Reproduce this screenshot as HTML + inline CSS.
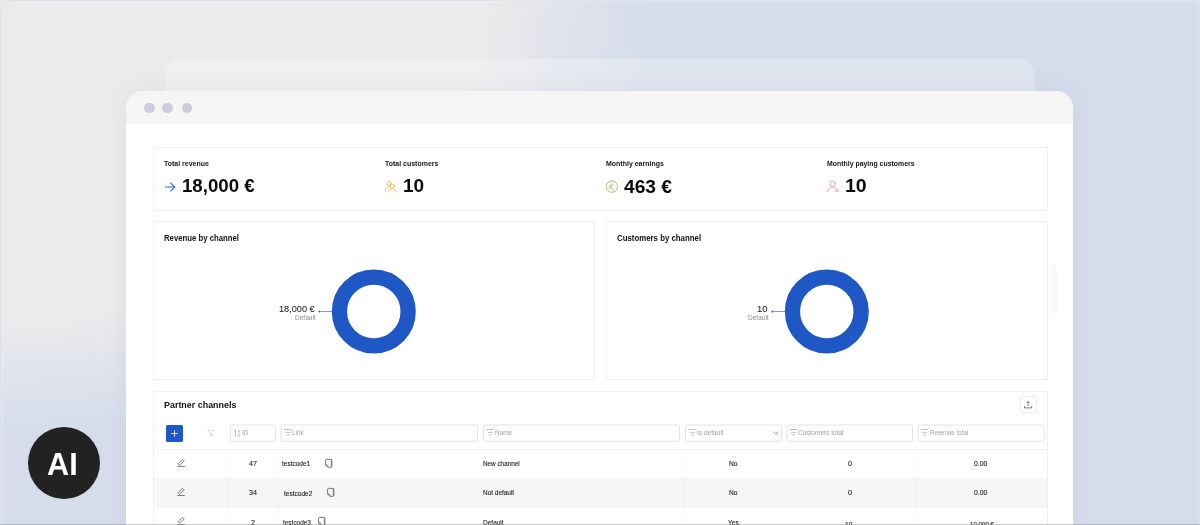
<!DOCTYPE html>
<html><head><meta charset="utf-8">
<style>
*{margin:0;padding:0;box-sizing:border-box}
html,body{width:1200px;height:525px;overflow:hidden}
body{font-family:"Liberation Sans",sans-serif;color:#111;position:relative;background:#d5ddeb}
.bg{position:absolute;left:0;top:0;width:1200px;height:525px;
background:radial-gradient(ellipse 700px 465px at 0 0,#ebebeb 0,#ebebeb 69%,#e0e3eb 81%,#d5ddeb 93%)}
.ghost{position:absolute;left:165px;top:59px;width:870px;height:60px;border-radius:16px;background:rgba(255,255,255,.27)}
.win{position:absolute;left:126px;top:91px;width:947px;height:460px;border-radius:17px;background:#fff;box-shadow:0 0 24px rgba(95,100,145,.085)}
.tb{position:absolute;left:0;top:0;width:100%;height:32.5px;background:#f5f5f5;border-radius:17px 17px 0 0}
.dot{position:absolute;top:11.65px;width:10.7px;height:10.7px;border-radius:50%;background:#cbccdc}
.card{position:absolute;border:1px solid #efefef;background:#fff;border-radius:1px}
.x{position:absolute;white-space:nowrap;line-height:1;transform-origin:0 50%;z-index:6}
.inp{position:absolute;top:424.7px;height:16.8px;border:1px solid #e5e5e5;border-radius:2px;background:#fff}
.ai{position:absolute;left:28.05px;top:427.2px;width:72.1px;height:72.1px;border-radius:50%;background:#222}
.ai span{position:absolute;left:0;width:72px;text-align:center;top:17px;font-size:33px;font-weight:bold;color:#fff;letter-spacing:-.5px}
</style></head><body>
<div class="bg"></div>
<svg style="position:absolute;left:0;top:0" width="1200" height="525" viewBox="0 0 1200 525">
<path d="M8 0H1200V1H8ZM0 7H1.8V525H0Z" fill="rgba(223,225,238,.85)"/><path d="M0 0H8V1H16A14.5 14.5 0 0 0 1.8 15.5V7H0Z" fill="rgba(231,231,238,.85)"/>
<path d="M1.8 15.5V525H3.2V16A12.8 12.8 0 0 1 16 2.2H1198.5V1H16A14.5 14.5 0 0 0 1.8 15.5Z" fill="rgba(240,240,246,.4)"/>
<path d="M1198.5 1H1200V525H1198.5Z" fill="rgba(222,229,232,.7)"/>
<path d="M1190 1H1198.5V10A9 9 0 0 0 1190 1Z" fill="rgba(222,226,232,.6)"/>
</svg>
<div class="ghost"></div>
<div class="win"><div class="tb"></div>
<div class="dot" style="left:18.25px"></div><div class="dot" style="left:36.35px"></div><div class="dot" style="left:55.75px"></div>
</div>
<div class="card" style="left:153px;top:147.4px;width:895px;height:63.4px"></div>
<div class="card" style="left:152.7px;top:221.4px;width:442.3px;height:158.6px"></div>
<div class="card" style="left:605.5px;top:221.4px;width:442.5px;height:158.6px"></div>
<div class="card" style="left:153px;top:390.5px;width:895px;height:160px"></div>
<div style="position:absolute;left:1020px;top:396px;width:16.5px;height:16.5px;border:1px solid #ededed;border-radius:2px;background:#fff"></div>
<div style="position:absolute;left:166px;top:425px;width:17px;height:17px;border-radius:1.5px;background:#1f57c4"></div>
<div style="position:absolute;left:154px;top:449px;width:893px;height:1px;background:#f1f1f1"></div>
<div style="position:absolute;left:154px;top:478px;width:893px;height:29.5px;background:#f5f6f7"></div>
<div style="position:absolute;left:0;top:524px;width:1200px;height:1px;background:rgba(150,152,160,.52);z-index:8"></div>
<div style="position:absolute;left:228px;top:455px;width:1px;height:75px;background:rgba(0,0,0,.025)"></div>
<div style="position:absolute;left:278px;top:455px;width:1px;height:75px;background:rgba(0,0,0,.025)"></div>
<div style="position:absolute;left:683px;top:455px;width:1px;height:75px;background:rgba(0,0,0,.022)"></div>
<div style="position:absolute;left:915px;top:455px;width:1px;height:75px;background:rgba(0,0,0,.022)"></div>
<div style="position:absolute;left:1050.5px;top:264px;width:6px;height:50px;border-radius:3px;background:rgba(0,0,0,.022);filter:blur(1.2px)"></div>
<div class="ai"></div>
<div style="position:absolute;left:0;top:0;width:1200px;height:525px;will-change:transform;z-index:6"><div class="x" id="x0" style="left:163.72px;top:160.01px;font-size:7.2px;font-weight:bold;color:#151515;transform:scaleX(0.9713)">Total revenue</div>
<div class="x" id="x1" style="left:384.52px;top:160.01px;font-size:7.2px;font-weight:bold;color:#151515;transform:scaleX(0.9708)">Total customers</div>
<div class="x" id="x2" style="left:605.52px;top:160.01px;font-size:7.2px;font-weight:bold;color:#151515;transform:scaleX(0.9725)">Monthly earnings</div>
<div class="x" id="x3" style="left:826.53px;top:160.01px;font-size:7.2px;font-weight:bold;color:#151515;transform:scaleX(0.9617)">Monthly paying customers</div>
<div class="x" id="x4" style="left:182.09px;top:176.15px;font-size:19.2px;font-weight:bold;color:#0b0b0b;transform:scaleX(0.9715)">18,000 €</div>
<div class="x" id="x5" style="left:403.07px;top:176.15px;font-size:19.2px;font-weight:bold;color:#0b0b0b;transform:scaleX(0.9920)">10</div>
<div class="x" id="x6" style="left:623.86px;top:177.25px;font-size:19.2px;font-weight:bold;color:#0b0b0b;transform:scaleX(0.9991)">463 €</div>
<div class="x" id="x7" style="left:845.05px;top:176.15px;font-size:19.2px;font-weight:bold;color:#0b0b0b;transform:scaleX(1.0155)">10</div>
<div class="x" id="x8" style="left:163.88px;top:234.29px;font-size:8.4px;font-weight:bold;color:#111;transform:scaleX(0.9260)">Revenue by channel</div>
<div class="x" id="x9" style="left:616.58px;top:234.29px;font-size:8.4px;font-weight:bold;color:#111;transform:scaleX(0.9363)">Customers by channel</div>
<div class="x" id="x10" style="left:163.92px;top:400.44px;font-size:9.4px;font-weight:bold;color:#111;transform:scaleX(0.9519)">Partner channels</div>
<div class="x" id="x11" style="left:279.31px;top:303.80px;font-size:9.8px;color:#242424;-webkit-text-stroke:.05px #242424;transform:scaleX(0.9349)">18,000 €</div>
<div class="x" id="x12" style="left:294.95px;top:315.10px;font-size:6.5px;color:#8c8c8c;transform:scaleX(1.0045)">Default</div>
<div class="x" id="x13" style="left:757.39px;top:303.80px;font-size:9.8px;color:#242424;-webkit-text-stroke:.05px #242424;transform:scaleX(0.9681)">10</div>
<div class="x" id="x14" style="left:747.95px;top:315.10px;font-size:6.5px;color:#8c8c8c;transform:scaleX(1.0045)">Default</div>
<div class="x" id="x15" style="left:241.86px;top:430.17px;font-size:6.3px;color:#a2a2a2;transform:scaleX(1.0108)">ID</div>
<div class="x" id="x16" style="left:292.46px;top:430.01px;font-size:6.6px;color:#a2a2a2;transform:scaleX(0.9673)">Link</div>
<div class="x" id="x17" style="left:494.65px;top:430.01px;font-size:6.6px;color:#a2a2a2;transform:scaleX(0.9783)">Name</div>
<div class="x" id="x18" style="left:696.54px;top:430.01px;font-size:6.6px;color:#a2a2a2;transform:scaleX(0.9980)">Is default</div>
<div class="x" id="x19" style="left:797.75px;top:430.01px;font-size:6.6px;color:#a2a2a2;transform:scaleX(0.9854)">Customers total</div>
<div class="x" id="x20" style="left:929.57px;top:430.01px;font-size:6.6px;color:#a2a2a2;transform:scaleX(0.9388)">Revenue total</div>
<div class="x" id="x21" style="left:249.31px;top:461.04px;font-size:6.8px;color:#1a1a1a;-webkit-text-stroke:.1px #1a1a1a;transform:scaleX(1.0500)">47</div>
<div class="x" id="x22" style="left:282.15px;top:461.04px;font-size:6.8px;color:#1a1a1a;-webkit-text-stroke:.1px #1a1a1a;transform:scaleX(0.9576)">testcode1</div>
<div class="x" id="x23" style="left:482.76px;top:461.04px;font-size:6.8px;color:#1a1a1a;-webkit-text-stroke:.1px #1a1a1a;transform:scaleX(0.9322)">New channel</div>
<div class="x" id="x24" style="left:729.34px;top:461.04px;font-size:6.8px;color:#1a1a1a;-webkit-text-stroke:.1px #1a1a1a;transform:scaleX(0.9806)">No</div>
<div class="x" id="x25" style="left:847.51px;top:461.04px;font-size:6.8px;color:#1a1a1a;-webkit-text-stroke:.1px #1a1a1a;transform:scaleX(1.0500)">0</div>
<div class="x" id="x26" style="left:974.43px;top:461.04px;font-size:6.8px;color:#1a1a1a;-webkit-text-stroke:.1px #1a1a1a;transform:scaleX(1.0076)">0.00</div>
<div class="x" id="x27" style="left:249.31px;top:490.04px;font-size:6.8px;color:#1a1a1a;-webkit-text-stroke:.1px #1a1a1a;transform:scaleX(1.0500)">34</div>
<div class="x" id="x28" style="left:284.05px;top:490.54px;font-size:6.8px;color:#1a1a1a;-webkit-text-stroke:.1px #1a1a1a;transform:scaleX(0.9610)">testcode2</div>
<div class="x" id="x29" style="left:482.75px;top:490.04px;font-size:6.8px;color:#1a1a1a;-webkit-text-stroke:.1px #1a1a1a;transform:scaleX(0.9471)">Not default</div>
<div class="x" id="x30" style="left:729.34px;top:490.04px;font-size:6.8px;color:#1a1a1a;-webkit-text-stroke:.1px #1a1a1a;transform:scaleX(0.9806)">No</div>
<div class="x" id="x31" style="left:847.51px;top:490.04px;font-size:6.8px;color:#1a1a1a;-webkit-text-stroke:.1px #1a1a1a;transform:scaleX(1.0500)">0</div>
<div class="x" id="x32" style="left:974.43px;top:490.04px;font-size:6.8px;color:#1a1a1a;-webkit-text-stroke:.1px #1a1a1a;transform:scaleX(1.0076)">0.00</div>
<div class="x" id="x33" style="left:46.65px;top:449.36px;font-size:31px;font-weight:bold;color:#fff;transform:scaleX(0.9886)">AI</div>
<div class="x" id="x34" style="left:251.11px;top:519.74px;font-size:6.8px;color:#1a1a1a;-webkit-text-stroke:.1px #1a1a1a;transform:scaleX(1.0500)">2</div>
<div class="x" id="x35" style="left:282.65px;top:519.74px;font-size:6.8px;color:#1a1a1a;-webkit-text-stroke:.1px #1a1a1a;transform:scaleX(0.9474)">testcode3</div>
<div class="x" id="x36" style="left:482.75px;top:519.74px;font-size:6.8px;color:#1a1a1a;-webkit-text-stroke:.1px #1a1a1a;transform:scaleX(0.9577)">Default</div>
<div class="x" id="x37" style="left:727.94px;top:519.54px;font-size:6.8px;color:#1a1a1a;-webkit-text-stroke:.1px #1a1a1a;transform:scaleX(0.9676)">Yes</div>
<div class="x" id="x38" style="left:845.14px;top:521.54px;font-size:6.8px;color:#1a1a1a;-webkit-text-stroke:.1px #1a1a1a;transform:scaleX(0.9831)">10</div>
<div class="x" id="x39" style="left:969.87px;top:521.54px;font-size:6.8px;color:#1a1a1a;-webkit-text-stroke:.1px #1a1a1a;transform:scaleX(0.9080)">10,000 €</div></div>
<svg style="position:absolute;left:0;top:0;z-index:5" width="1200" height="525" viewBox="0 0 1200 525">
 <path d="M165 187h9.6M170.4 182.6l4.4 4.4-4.4 4.4" stroke="#3f6fd0" stroke-width="1.1" fill="none"/>
 <g stroke="#e9bb5a" stroke-width=".9" fill="none" stroke-linecap="round">
  <circle cx="388.9" cy="183.5" r="2.15"/><path d="M385.4 190.6C385.7 188 387 186.6 388.5 186.2"/>
  <circle cx="392.3" cy="186.2" r="2.2"/><path d="M388 192.2C388.3 189.9 390 188.9 392.3 188.9C394.6 188.9 396 190 396.3 192.2"/>
 </g>
 <g stroke="#9cc56e" fill="none"><circle cx="611.8" cy="186.6" r="5.7" stroke-width="1"/>
  <path d="M613.8 184.4a2.6 2.6 0 1 0 0 4.4M609.3 185.9h3.2M609.3 187.3h3.2" stroke-width=".8"/></g>
 <g stroke="#e59aa8" stroke-width=".9" fill="none" stroke-linecap="round">
  <circle cx="832.5" cy="183.8" r="2.7"/><path d="M827.7 191.6C828.1 188.6 830 187.1 832.5 187.1C833.9 187.1 835 187.5 835.8 188.2"/>
  <path d="M835 189.8h3.4M835 191.4h3.4" stroke-width=".8"/>
 </g>
 <path d="M174.5 430.2v6.6M171.2 433.5h6.6" stroke="#fff" stroke-width=".8" fill="none"/>
 <path d="M207.6 430.2h6.4l-2.5 3v3l-1.4-.8v-2.2z" stroke="#cfcfcf" stroke-width=".7" fill="none" stroke-linejoin="round"/>
 <path d="M212.6 434.6l1.4 1.4M214 434.6l-1.4 1.4" stroke="#cfcfcf" stroke-width=".6"/>
 <rect x="230.3" y="425" width="45.30" height="16.3" rx="2" fill="#fff" stroke="#e3e3e3" stroke-width="1"/><rect x="281.2" y="425" width="196.40" height="16.3" rx="2" fill="#fff" stroke="#e3e3e3" stroke-width="1"/><rect x="483.6" y="425" width="196.00" height="16.3" rx="2" fill="#fff" stroke="#e3e3e3" stroke-width="1"/><rect x="685.6" y="425" width="95.70" height="16.3" rx="2" fill="#fff" stroke="#e3e3e3" stroke-width="1"/><rect x="787" y="425" width="125.50" height="16.3" rx="2" fill="#fff" stroke="#e3e3e3" stroke-width="1"/><rect x="918.2" y="425" width="126.00" height="16.3" rx="2" fill="#fff" stroke="#e3e3e3" stroke-width="1"/><path d="M284 429.45h7.4M285.40 432.4h4.9M286.40 434.9h2.9" stroke="#b2b2b2" stroke-width=".85" fill="none"/><path d="M486.5 429.45h7.4M487.90 432.4h4.9M488.90 434.9h2.9" stroke="#b2b2b2" stroke-width=".85" fill="none"/><path d="M688.5 429.45h7.4M689.90 432.4h4.9M690.90 434.9h2.9" stroke="#b2b2b2" stroke-width=".85" fill="none"/><path d="M789.8 429.45h7.4M791.20 432.4h4.9M792.20 434.9h2.9" stroke="#b2b2b2" stroke-width=".85" fill="none"/><path d="M920.8 429.45h7.4M922.20 432.4h4.9M923.20 434.9h2.9" stroke="#b2b2b2" stroke-width=".85" fill="none"/>
 <path d="M235.4 436.6V430.4" stroke="#a6a6a6" stroke-width=".8" fill="none"/><path d="M234.4 431.6l1-1.5 1 1.5z" fill="#a6a6a6"/>
 <path d="M238.1 432.6l.9-2.3.9 2.3M238.2 434.1h1.7l-1.7 2.4h1.7" stroke="#a6a6a6" stroke-width=".6" fill="none"/>

 <path d="M773.2 431.5l2.6 2.9 2.6-2.9" stroke="#888" stroke-width=".8" fill="none"/>
 <path d="M1028.1 406V401.6M1026.6 403l1.5-1.5 1.5 1.5M1024.5 406v1.9h7.2v-1.9" stroke="#555" stroke-width=".75" fill="none"/>
 <g transform="translate(0,0)" stroke="#606060" stroke-width=".75" fill="none" stroke-linejoin="round"><rect x="177.8" y="461.2" width="6.6" height="2.2" rx=".6" transform="rotate(-42 181.1 462.3)"/><path d="M177.2 466.5h7.6" stroke-width=".8"/></g><g transform="translate(0,29)" stroke="#606060" stroke-width=".75" fill="none" stroke-linejoin="round"><rect x="177.8" y="461.2" width="6.6" height="2.2" rx=".6" transform="rotate(-42 181.1 462.3)"/><path d="M177.2 466.5h7.6" stroke-width=".8"/></g><g transform="translate(0,58)" stroke="#606060" stroke-width=".75" fill="none" stroke-linejoin="round"><rect x="177.8" y="461.2" width="6.6" height="2.2" rx=".6" transform="rotate(-42 181.1 462.3)"/><path d="M177.2 466.5h7.6" stroke-width=".8"/></g><g transform="translate(0,0)" stroke="#606060" stroke-width=".85" fill="none" stroke-linejoin="round"><path d="M327 459.4h4.1a.8.8 0 0 1 .8.8v6.3a.8.8 0 0 1-.8.8h-3.3l-2.2-2.2v-4.9a.8.8 0 0 1 .8-.8z"/><path d="M331.3 460v6.6" stroke-width=".7"/><path d="M325.8 465h1.3a.7.7 0 0 1 .7.7v1.3" stroke-width=".8"/></g><g transform="translate(2,29)" stroke="#606060" stroke-width=".85" fill="none" stroke-linejoin="round"><path d="M327 459.4h4.1a.8.8 0 0 1 .8.8v6.3a.8.8 0 0 1-.8.8h-3.3l-2.2-2.2v-4.9a.8.8 0 0 1 .8-.8z"/><path d="M331.3 460v6.6" stroke-width=".7"/><path d="M325.8 465h1.3a.7.7 0 0 1 .7.7v1.3" stroke-width=".8"/></g><g transform="translate(-7,58)" stroke="#606060" stroke-width=".85" fill="none" stroke-linejoin="round"><path d="M327 459.4h4.1a.8.8 0 0 1 .8.8v6.3a.8.8 0 0 1-.8.8h-3.3l-2.2-2.2v-4.9a.8.8 0 0 1 .8-.8z"/><path d="M331.3 460v6.6" stroke-width=".7"/><path d="M325.8 465h1.3a.7.7 0 0 1 .7.7v1.3" stroke-width=".8"/></g>
 <circle cx="373.8" cy="311.5" r="34.35" fill="none" stroke="#1f57c4" stroke-width="15.3"/>
 <circle cx="826.8" cy="311.5" r="34.35" fill="none" stroke="#1f57c4" stroke-width="15.3"/>
 <circle cx="319.5" cy="311.5" r="1" fill="#1f57c4"/><path d="M321 311.5H332" stroke="#1f57c4" stroke-width=".6"/>
 <circle cx="772.5" cy="311.5" r="1" fill="#1f57c4"/><path d="M774 311.5H785" stroke="#1f57c4" stroke-width=".6"/>
</svg>

</body></html>
